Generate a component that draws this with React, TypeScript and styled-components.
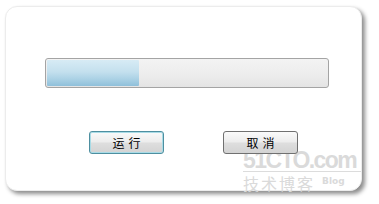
import React from "react"
import styled, { createGlobalStyle } from "styled-components"

const GlobalStyle = createGlobalStyle`
  html, body {
    margin: 0;
    padding: 0;
    background: #ffffff;
  }
  body {
    font-family: "Noto Sans CJK SC", "Noto Sans", sans-serif;
  }
`

const Page = styled.div`
  width: 379px;
  height: 204px;
  padding: 6px 0 0 5px;
  box-sizing: border-box;
  background: #ffffff;
`

const Window = styled.div`
  position: relative;
  width: 357px;
  height: 185px;
  box-sizing: border-box;
  border-radius: 12px;
  background: #ffffff;
  border: 1px solid #ececec;
  box-shadow: 3px 3px 4px rgba(0, 0, 0, 0.45);
  display: flex;
  flex-direction: column;
`

const ProgressTrack = styled.div`
  margin: 51px 0 0 39px;
  width: 284px;
  height: 30px;
  box-sizing: border-box;
  border: 1px solid #a4a4a4;
  border-radius: 3px;
  background: linear-gradient(#f3f3f3, #ececec 60%, #e4e4e4);
  padding: 1px;
  display: flex;
`

const ProgressFill = styled.div`
  height: 100%;
  border-radius: 1px;
  background: linear-gradient(#d7ebf5 0%, #c4e0ee 45%, #aed3e6 70%, #8fc0da 100%);
`

const ButtonRow = styled.div`
  position: relative;
  z-index: 1;
  display: flex;
  gap: 59px;
  margin: 43px 0 0 83px;
`

const Button = styled.button<{ primary?: boolean }>`
  width: 75px;
  height: 23px;
  box-sizing: border-box;
  border-radius: 3px;
  border: 1px solid ${({ primary }) => (primary ? "#4e8fa0" : "#707070")};
  box-shadow: ${({ primary }) => (primary ? "inset 0 0 0 1px #a9dbe6" : "none")};
  background: linear-gradient(#fafafa 0%, #ececec 48%, #dedede 52%, #d3d3d3 100%);
  font-family: "Noto Sans CJK SC", sans-serif;
  font-size: 12px;
  letter-spacing: 4px;
  padding: 0 0 0 4px;
  color: #000000;
  line-height: 20px;
`

const Watermark = styled.div`
  position: absolute;
  left: 237px;
  top: 143px;
  width: 118px;
  display: flex;
  flex-direction: column;
  color: #dadada;
  pointer-events: none;
`

const WatermarkTitle = styled.div`
  font-family: "Liberation Sans", sans-serif;
  font-weight: bold;
  font-size: 23px;
  line-height: 20px;
  letter-spacing: -1.6px;
  border-bottom: 1px solid #dcdcdc;
  padding-bottom: 1px;
  white-space: nowrap;
`

const WatermarkSub = styled.div`
  display: flex;
  align-items: flex-start;
  gap: 7px;
`

const WatermarkCn = styled.span`
  font-family: "Noto Sans CJK SC", sans-serif;
  font-size: 16px;
  line-height: 23px;
  letter-spacing: 2px;
`

const WatermarkBlog = styled.span`
  font-family: "DejaVu Sans", sans-serif;
  font-weight: bold;
  font-size: 9px;
  line-height: 12px;
  margin-top: 3px;
`

export default function App() {
  const progress = 33
  return (
    <>
      <GlobalStyle />
      <Page>
        <Window>
          <ProgressTrack>
            <ProgressFill style={{ width: `${progress}%` }} />
          </ProgressTrack>
          <ButtonRow>
            <Button primary>运行</Button>
            <Button>取消</Button>
          </ButtonRow>
          <Watermark>
            <WatermarkTitle>51CTO.com</WatermarkTitle>
            <WatermarkSub>
              <WatermarkCn>技术博客</WatermarkCn>
              <WatermarkBlog>Blog</WatermarkBlog>
            </WatermarkSub>
          </Watermark>
        </Window>
      </Page>
    </>
  )
}
